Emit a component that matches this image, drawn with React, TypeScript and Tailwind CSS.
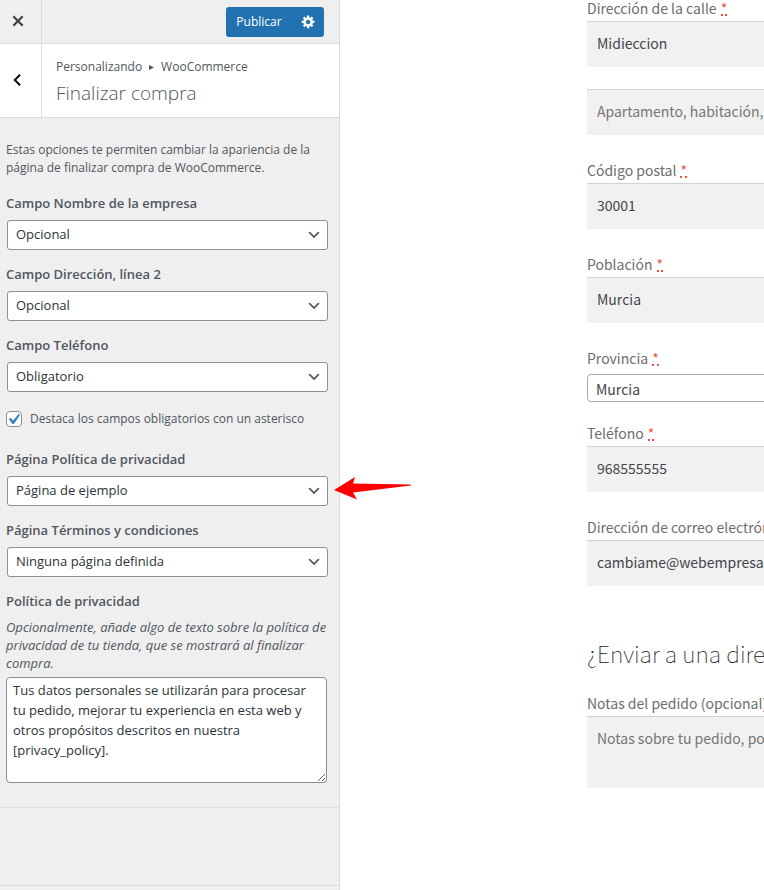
import type { ReactNode } from 'react';

const GEAR =
  'M18 12h-2.18c-.17.7-.44 1.35-.81 1.93l1.54 1.54-2.1 2.1-1.54-1.54c-.58.36-1.23.63-1.91.79V19H8v-2.18c-.68-.16-1.33-.43-1.91-.79l-1.54 1.54-2.12-2.12 1.54-1.54c-.36-.58-.63-1.23-.79-1.91H1V9.03h2.17c.16-.7.44-1.35.8-1.94L2.43 5.55l2.1-2.1 1.54 1.54c.58-.37 1.24-.64 1.93-.81V2h3v2.18c.68.16 1.33.43 1.91.79l1.54-1.54 2.12 2.12-1.54 1.54c.36.59.64 1.24.8 1.94H18V12zm-8.5 1.5c1.66 0 3-1.34 3-3s-1.34-3-3-3-3 1.34-3 3 1.34 3 3 3z';

function SelectField({ id, label, value, children }: { id: string; label: string; value: string; children?: ReactNode }) {
  return (
    <div className="mb-3">
      <label htmlFor={id} className="mb-[5px] block text-[13px] leading-6 font-semibold">
        {label}
      </label>
      <div className="relative pl-px">
        <select
          id={id}
          defaultValue={value}
          className="block h-[30px] w-full appearance-none rounded-[3px] border border-[#8c8f94] bg-white pr-6 pl-2 text-[13px] text-[#2c3338]"
        >
          <option>{value}</option>
        </select>
        <svg viewBox="0 0 20 20" className="pointer-events-none absolute top-[7px] right-1.5 size-4" fill="#555">
          <path d="M5 6l5 5 5-5 2 1-7 7-7-7 2-1z" />
        </svg>
        {children}
      </div>
    </div>
  );
}

function FormLabel({ id, children, required }: { id: string; children: ReactNode; required?: boolean }) {
  return (
    <label htmlFor={id} className="block h-[26px] text-sm leading-[26px] whitespace-nowrap text-[#6d6d6d]">
      {children}
      {required && (
        <abbr title="obligatorio" className="ml-1 inline-block h-[18px] border-b-2 border-dotted border-[#ea5340] leading-5 text-[#ea5340] no-underline">
          *
        </abbr>
      )}
    </label>
  );
}

function TextField({ id, label, value, placeholder }: { id: string; label?: string; value?: string; placeholder?: string }) {
  return (
    <div className="mb-[22px]">
      {label && (
        <FormLabel id={id} required>
          {label}
        </FormLabel>
      )}
      <input
        id={id}
        type="text"
        defaultValue={value}
        placeholder={placeholder}
        aria-label={label ? undefined : placeholder}
        className="block h-[46px] w-full border-t border-[#d2d2d2] bg-[#f1f1f1] px-2.5 pb-[3px] text-sm text-[#43454b] placeholder:text-[#757575]"
      />
    </div>
  );
}

function Customizer() {
  return (
    <aside className="relative z-10 flex w-[340px] shrink-0 flex-col border-r border-[#dcdcdc] bg-[#efefef] font-['Open_Sans','Noto_Sans',sans-serif] text-[#50575e]">
      <header className="flex h-11 border-b border-[#dcdcdc]">
        <button type="button" aria-label="Cerrar" className="flex w-[42px] items-center justify-center border-r border-[#dcdcdc] pr-1.5 pb-px text-[#3c434a]">
          <svg viewBox="0 0 20 20" className="size-[22px]" fill="currentColor">
            <path d="M14.95 6.46L11.41 10l3.54 3.54-1.41 1.41L10 11.42l-3.53 3.53-1.42-1.42L8.58 10 5.05 6.47l1.42-1.42L10 8.58l3.54-3.53z" />
          </svg>
        </button>
        <div className="flex flex-1 items-center justify-end pr-[15px] text-white">
          <button type="button" className="h-[30px] w-[67px] rounded-l-[3px] border-r border-[#2a76b5] bg-[#2271b1] text-xs">
            Publicar
          </button>
          <button type="button" aria-label="Ajustes de publicación" className="flex h-[30px] w-[31px] items-center justify-center rounded-r-[3px] bg-[#2271b1]">
            <svg viewBox="0 0 20 20" className="size-[15px]" fill="currentColor">
              <path d={GEAR} />
            </svg>
          </button>
        </div>
      </header>

      <div className="flex h-[74px] border-b border-[#dcdcdc] bg-white">
        <button type="button" aria-label="Atrás" className="flex w-[42px] items-center justify-center border-r border-[#dcdcdc] pr-2 pb-0.5 text-black">
          <svg viewBox="0 0 20 20" className="size-[18px]" fill="currentColor">
            <path d="M14 5l-5 5 5 5-1 2-7-7 7-7z" />
          </svg>
        </button>
        <div className="flex-1 pt-3.5 pl-3.5">
          <p className="flex items-center text-xs leading-[18px]">
            Personalizando
            <svg viewBox="0 0 6 6" className="mx-[7px] size-[5px]" fill="currentColor">
              <path d="M0 0l6 3-6 3z" />
            </svg>
            WooCommerce
          </p>
          <h1 className="mt-1 text-[19px] leading-[26px] font-light">Finalizar compra</h1>
        </div>
      </div>

      <form className="border-b border-[#dcdcdc] pt-[23px] pr-[11px] pb-6 pl-1.5">
        <p className="mb-3.5 text-xs leading-[18px]">
          Estas opciones te permiten cambiar la apariencia de la página de finalizar compra de WooCommerce.
        </p>
        <SelectField id="company" label="Campo Nombre de la empresa" value="Opcional" />
        <SelectField id="address2" label="Campo Dirección, línea 2" value="Opcional" />
        <SelectField id="phone" label="Campo Teléfono" value="Obligatorio" />

        <div className="mt-[17px] mb-[18px] flex h-5 items-center text-xs">
          <span className="relative mr-2 size-4">
            <input
              id="highlight"
              type="checkbox"
              defaultChecked
              className="peer block size-4 appearance-none rounded-[4px] border border-[#8c8f94] bg-white"
            />
            <svg viewBox="3 2 15 15" className="pointer-events-none absolute inset-0 hidden size-4 peer-checked:block" fill="#3582c4">
              <path d="M14.83 4.89l1.34.94-5.81 8.38H9.02L5.78 9.67l1.34-1.25 2.57 2.4z" />
            </svg>
          </span>
          <label htmlFor="highlight">Destaca los campos obligatorios con un asterisco</label>
        </div>

        <SelectField id="privacy-page" label="Página Política de privacidad" value="Página de ejemplo">
          <svg viewBox="0 0 78 24" className="pointer-events-none absolute top-0 left-full ml-1.5 h-6 w-[78px]" fill="#f00">
            <path d="M0 14L21 1l-2 6.500 58 1v1L19 16.500l4 7z" />
          </svg>
        </SelectField>
        <SelectField id="terms-page" label="Página Términos y condiciones" value="Ninguna página definida" />

        <label htmlFor="privacy-text" className="mb-[5px] block text-[13px] leading-6 font-semibold">
          Política de privacidad
        </label>
        <p className="-mr-2 mb-[5px] text-[13px] leading-[18px] italic">
          Opcionalmente, añade algo de texto sobre la política de privacidad de tu tienda, que se mostrará al finalizar compra.
        </p>
        <textarea
          id="privacy-text"
          defaultValue="Tus datos personales se utilizarán para procesar tu pedido, mejorar tu experiencia en esta web y otros propósitos descritos en nuestra [privacy_policy]."
          className="block h-[106px] w-[321px] rounded-[4px] border border-[#8c8f94] bg-white px-1.5 py-0.5 text-[13px] leading-5 text-[#2c3338]"
        />
      </form>

      <footer className="mt-auto h-[5px] border-t border-[#dcdcdc]" />
    </aside>
  );
}

function Checkout() {
  return (
    <main className="min-w-0 flex-1 overflow-hidden pl-[247px] font-['Noto_Sans_CJK_JP',sans-serif]">
      <form className="-mt-[5px] min-w-[300px]">
        <TextField id="street" label="Dirección de la calle" value="Midieccion" />
        <TextField id="apartment" placeholder="Apartamento, habitación, etc. (opcional)" />
        <TextField id="postcode" label="Código postal" value="30001" />
        <TextField id="city" label="Población" value="Murcia" />
        <FormLabel id="state" required>
          Provincia
        </FormLabel>
        <select
          id="state"
          className="mt-[3px] mb-[18px] block h-7 w-full appearance-none rounded-[4px] border border-[#aaa] bg-white px-2 pt-0.5 text-sm leading-none text-[#43454b]"
        >
          <option>Murcia</option>
        </select>
        <TextField id="tel" label="Teléfono" value="968555555" />
        <TextField id="email" label="Dirección de correo electrónico" value="cambiame@webempresa.com" />
        <h2 className="mt-12 mb-[18px] font-['Noto_Sans_CJK_JP_Thin','Noto_Sans_CJK_JP_Light','Noto_Sans_CJK_JP',sans-serif] text-[23px] leading-[38px] font-extralight whitespace-nowrap text-[#222]">
          ¿Enviar a una dirección diferente?
        </h2>
        <FormLabel id="notes">Notas del pedido (opcional)</FormLabel>
        <textarea
          id="notes"
          placeholder="Notas sobre tu pedido, por ejemplo, notas especiales para la entrega."
          className="block h-[72px] w-full resize-none border-t border-[#d2d2d2] bg-[#f1f1f1] px-2.5 py-[9px] text-sm leading-6 whitespace-nowrap placeholder:text-[#757575]"
        />
      </form>
    </main>
  );
}

export default function App() {
  return (
    <div className="flex min-h-screen bg-white">
      <Customizer />
      <Checkout />
    </div>
  );
}
